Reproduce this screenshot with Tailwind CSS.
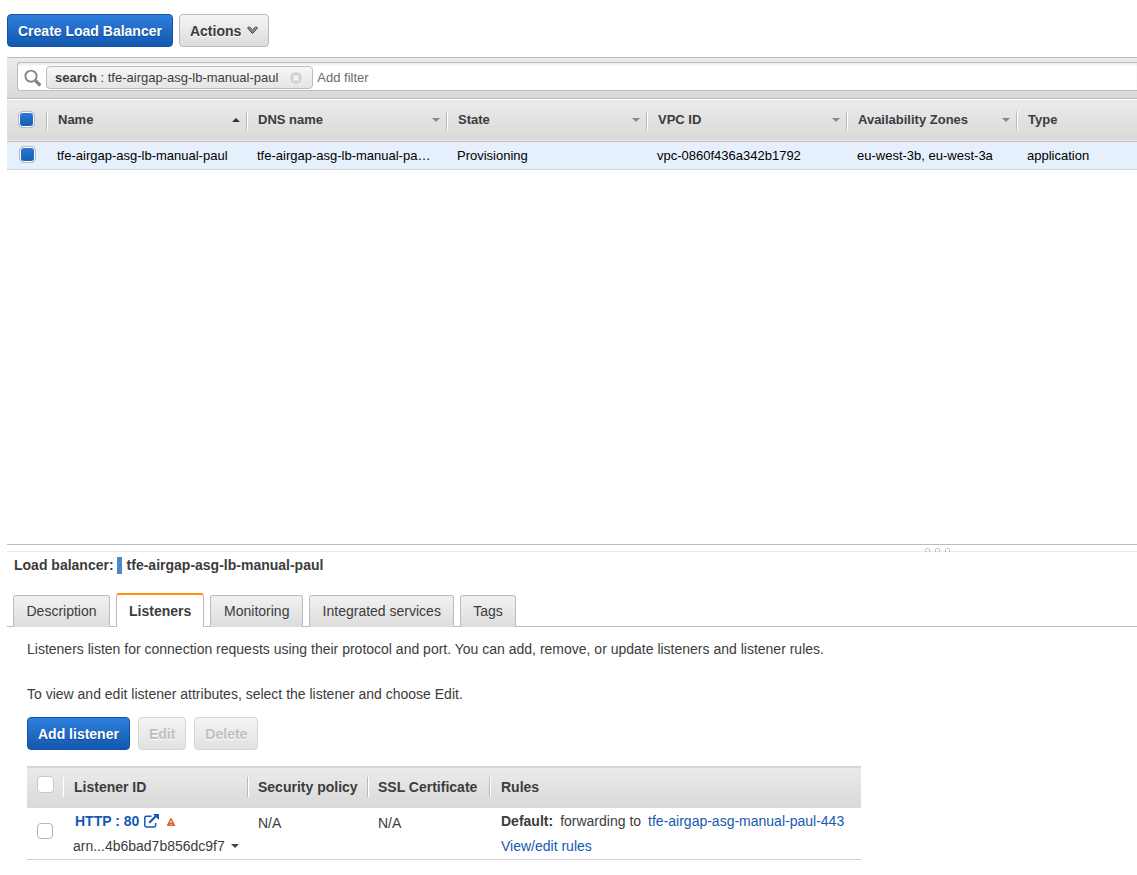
<!DOCTYPE html>
<html lang="en">
<head>
<meta charset="utf-8">
<title>Load Balancers</title>
<script src="https://cdn.jsdelivr.net/npm/@tailwindcss/browser@4"></script>
</head>
<body class="flex min-h-screen flex-col bg-white pl-[7px] font-['Liberation_Sans',Arial,sans-serif] text-[14px] leading-[20px] text-[#3c3c3c]">

<header class="flex gap-[6px] pt-[14px] pb-[10px]">
  <button class="h-[33px] rounded-[4px] border border-[#1552a0] bg-linear-to-b from-[#2f7fde] to-[#1158af] px-[10px] font-bold text-white [text-shadow:0_1px_1px_#0f4a94]">Create Load Balancer</button>
  <button class="flex h-[33px] items-center gap-[6px] rounded-[4px] border border-[#bababa] bg-linear-to-b from-[#f4f4f4] to-[#dddddd] px-[10px] font-bold [text-shadow:0_1px_0_#fff]">Actions
    <svg class="h-[10px] w-[11px]" viewBox="0 0 11 10" aria-hidden="true"><path d="M1 1h2.500l2 2.500L7.500 1H10v1.500L5.500 7.500 1 2.500z" fill="#8c8c8c"/><path d="M1 1v1.500l4.500 5 4.500-5V1" fill="none" stroke="#3c3c3c"/><path d="M1 1h2l2.500 2.800L8 1h2" fill="none" stroke="#666" stroke-width=".8"/></svg>
  </button>
</header>

<section class="min-h-[480px] flex-1">
  <div class="border-y border-[#bcbcbc] bg-linear-to-b from-[#ebebeb] to-[#d9d9d9] pt-[4px] pb-[7px] pl-[10px]">
    <div class="flex h-[29px] items-center rounded-l-[3px] border border-r-0 border-[#bcbcbc] bg-white pt-[2px] pl-[6px] text-[13px] shadow-[inset_0_2px_2px_#eeeeee]">
      <svg class="mr-[4px] h-[18px] w-[18px]" viewBox="0 0 18 18" fill="none" stroke="#858585" aria-hidden="true"><circle cx="7" cy="7.200" r="5.600" stroke-width="1.900"/><path d="m11.300 11.500 5 5" stroke-width="3.200"/></svg>
      <div class="flex h-[23px] items-center rounded-[4px] border border-[#bcbcbc] bg-linear-to-b from-[#f7f7f7] to-[#e5e5e5] pr-[10px] pl-[8px]">
        <span><b>search</b> : tfe-airgap-asg-lb-manual-paul</span>
        <button class="ml-[12px]" aria-label="Remove filter"><svg class="block h-[12px] w-[12px]" viewBox="0 0 12 12"><circle cx="6" cy="6" r="6" fill="#d2d2d2"/><path d="m3.500 3.500 5 5m0-5-5 5" stroke="#fff" stroke-width="1.600"/></svg></button>
      </div>
      <input class="ml-[4px] min-w-0 flex-1 outline-none placeholder:text-[#6b6b6b]" type="text" placeholder="Add filter" aria-label="Add filter">
    </div>
  </div>
  <table class="mt-px w-full table-fixed text-left text-[13px]">
    <colgroup><col class="w-[39px]"><col class="w-[200px]"><col class="w-[200px]"><col class="w-[200px]"><col class="w-[200px]"><col class="w-[170px]"><col></colgroup>
    <thead>
      <tr class="h-[41px] border-b border-[#bcbcbc] bg-linear-to-b from-[#ebebeb] to-[#d9d9d9]">
        <th class="p-0 pb-[2px] pl-[11px]"><input type="checkbox" checked aria-label="Select all load balancers" class="block size-[17px] appearance-none rounded-[5px] border border-[#bbbbbb] bg-white checked:bg-linear-to-b checked:from-[#2a79d8] checked:to-[#155cb4] checked:shadow-[inset_0_0_0_1px_#fff]"></th>
        <th class="p-0"><div class="flex h-[19px] items-center justify-between border-l border-[#bbbbbb] pr-[6px] pl-[11px] shadow-[inset_1px_0_0_#fff]">Name<svg class="h-[4px] w-[8px]" viewBox="0 0 8 4" aria-hidden="true"><path d="M0 4 4 0l4 4z" fill="#333"/></svg></div></th>
        <th class="p-0"><div class="flex h-[19px] items-center justify-between border-l border-[#bbbbbb] pr-[6px] pl-[11px] shadow-[inset_1px_0_0_#fff]">DNS name<svg class="h-[4px] w-[8px]" viewBox="0 0 8 4" aria-hidden="true"><path d="M0 0h8L4 4z" fill="#888"/></svg></div></th>
        <th class="p-0"><div class="flex h-[19px] items-center justify-between border-l border-[#bbbbbb] pr-[6px] pl-[11px] shadow-[inset_1px_0_0_#fff]">State<svg class="h-[4px] w-[8px]" viewBox="0 0 8 4" aria-hidden="true"><path d="M0 0h8L4 4z" fill="#888"/></svg></div></th>
        <th class="p-0"><div class="flex h-[19px] items-center justify-between border-l border-[#bbbbbb] pr-[6px] pl-[11px] shadow-[inset_1px_0_0_#fff]">VPC ID<svg class="h-[4px] w-[8px]" viewBox="0 0 8 4" aria-hidden="true"><path d="M0 0h8L4 4z" fill="#888"/></svg></div></th>
        <th class="p-0"><div class="flex h-[19px] items-center justify-between border-l border-[#bbbbbb] pr-[6px] pl-[11px] shadow-[inset_1px_0_0_#fff]">Availability Zones<svg class="h-[4px] w-[8px]" viewBox="0 0 8 4" aria-hidden="true"><path d="M0 0h8L4 4z" fill="#888"/></svg></div></th>
        <th class="p-0"><div class="flex h-[19px] items-center border-l border-[#bbbbbb] pl-[11px] shadow-[inset_1px_0_0_#fff]">Type</div></th>
      </tr>
    </thead>
    <tbody>
      <tr class="h-[28px] border-b border-[#d0d5db] bg-[#e6f0fc] text-black">
        <td class="p-0 pb-[2px] pl-[12px]"><input type="checkbox" checked aria-label="Select tfe-airgap-asg-lb-manual-paul" class="block size-[17px] appearance-none rounded-[5px] border border-[#bbbbbb] bg-white checked:bg-linear-to-b checked:from-[#2a79d8] checked:to-[#155cb4] checked:shadow-[inset_0_0_0_1px_#fff]"></td>
        <td class="p-0 pt-px pl-[11px]">tfe-airgap-asg-lb-manual-paul</td>
        <td class="p-0 pt-px pl-[11px]">tfe-airgap-asg-lb-manual-pa…</td>
        <td class="p-0 pt-px pl-[11px]">Provisioning</td>
        <td class="p-0 pt-px pl-[11px]">vpc-0860f436a342b1792</td>
        <td class="p-0 pt-px pl-[11px]">eu-west-3b, eu-west-3a</td>
        <td class="p-0 pt-px pl-[11px]">application</td>
      </tr>
    </tbody>
  </table>
</section>

<section class="pb-[15px]">
  <div class="relative h-[8px] border-t border-b border-t-[#bcbcbc] border-b-[#ebebeb]">
    <svg class="absolute top-[3px] left-[918px] h-[4px] w-[25px]" viewBox="0 0 25 4" fill="none" stroke="#bcbcbc" aria-hidden="true"><path d="M.5 4V1.500L1.500.5h2l1 1V4M10.500 4V1.500l1-1h2l1 1V4M20.500 4V1.500l1-1h2l1 1V4"/></svg>
  </div>
  <h2 class="flex items-center pt-[3px] pl-[7px] font-bold">Load balancer:<span class="mr-[5px] ml-[3px] h-[17px] w-[5px] bg-[#4a8acb]"></span>tfe-airgap-asg-lb-manual-paul</h2>
  <div role="tablist" class="mt-[18px] flex items-end gap-[6px] border-b border-[#bcbcbc] pl-[6px]">
    <button role="tab" class="-mb-px h-[32px] min-w-[97px] rounded-t-[3px] border border-b-0 border-[#bcbcbc] bg-linear-to-b from-[#f2f2f2] to-[#dcdcdc] px-[12px] pb-[2px]">Description</button>
    <button role="tab" aria-selected="true" class="-mb-px h-[34px] rounded-t-[3px] border border-t-2 border-b-0 border-[#bcbcbc] border-t-[#ff9100] bg-white px-[12px] font-bold">Listeners</button>
    <button role="tab" class="-mb-px h-[32px] min-w-[93px] rounded-t-[3px] border border-b-0 border-[#bcbcbc] bg-linear-to-b from-[#f2f2f2] to-[#dcdcdc] px-[12px] pb-[2px]">Monitoring</button>
    <button role="tab" class="-mb-px h-[32px] min-w-[145px] rounded-t-[3px] border border-b-0 border-[#bcbcbc] bg-linear-to-b from-[#f2f2f2] to-[#dcdcdc] px-[12px] pb-[2px]">Integrated services</button>
    <button role="tab" class="-mb-px h-[32px] rounded-t-[3px] border border-b-0 border-[#bcbcbc] bg-linear-to-b from-[#f2f2f2] to-[#dcdcdc] px-[12px] pb-[2px]">Tags</button>
  </div>
  <div role="tabpanel" class="pt-[12px] pl-[20px]">
    <p>Listeners listen for connection requests using their protocol and port. You can add, remove, or update listeners and listener rules.</p>
    <p class="mt-[25px]">To view and edit listener attributes, select the listener and choose Edit.</p>
    <div class="mt-[13px] flex gap-[8px]">
      <button class="h-[33px] rounded-[4px] border border-[#1552a0] bg-linear-to-b from-[#2f7fde] to-[#1158af] px-[10px] font-bold text-white [text-shadow:0_1px_1px_#0f4a94]">Add listener</button>
      <button disabled class="h-[33px] rounded-[4px] border border-[#d5d5d5] bg-linear-to-b from-[#f4f4f4] to-[#e2e2e2] px-[10px] font-bold text-[#c0c0c0] [text-shadow:0_1px_0_#fff]">Edit</button>
      <button disabled class="h-[33px] rounded-[4px] border border-[#d5d5d5] bg-linear-to-b from-[#f4f4f4] to-[#e2e2e2] px-[10px] font-bold text-[#c0c0c0] [text-shadow:0_1px_0_#fff]">Delete</button>
    </div>
    <table class="mt-[16px] w-full max-w-[834px] table-fixed text-left">
      <colgroup><col class="w-[36px]"><col class="w-[184px]"><col class="w-[120px]"><col class="w-[122px]"><col></colgroup>
      <thead>
        <tr class="h-[41px] border-t border-[#d0d0d0] bg-linear-to-b from-[#ebebeb] to-[#d9d9d9]">
          <th class="p-0 pb-[6px] pl-[10px]"><input type="checkbox" aria-label="Select all listeners" class="block size-[17px] appearance-none rounded-[4px] border border-[#c8c8c8] bg-white"></th>
          <th class="p-0"><div class="flex h-[20px] items-center border-l border-white pl-[10px]">Listener ID</div></th>
          <th class="p-0"><div class="flex h-[20px] items-center border-l border-[#bbbbbb] pl-[10px] whitespace-nowrap shadow-[inset_1px_0_0_#fff]">Security policy</div></th>
          <th class="p-0"><div class="flex h-[20px] items-center border-l border-[#bbbbbb] pl-[10px] whitespace-nowrap shadow-[inset_1px_0_0_#fff]">SSL Certificate</div></th>
          <th class="p-0"><div class="flex h-[20px] items-center border-l border-[#bbbbbb] pl-[11px] shadow-[inset_1px_0_0_#fff]">Rules</div></th>
        </tr>
      </thead>
      <tbody>
        <tr class="h-[52px] border-b border-[#d0d0d0] align-top">
          <td class="p-0 pt-[15px] pl-[10px]"><input type="checkbox" aria-label="Select HTTP : 80" class="block size-[16px] appearance-none rounded-[4px] border border-[#b5b5b5] bg-white"></td>
          <td class="p-0 pt-[3px] pl-[10px]">
            <div class="flex items-center pl-[2px]"><a href="#" class="flex items-center gap-[5px] font-bold text-[#1459b3]">HTTP : 80
              <svg class="h-[14px] w-[15px]" viewBox="0 0 15 14" fill="none" stroke="#1459b3" stroke-width="1.500" aria-hidden="true"><path d="M7.500 2.200H2.200Q.8 2.200.8 3.600v8q0 1.400 1.400 1.400h8q1.400 0 1.400-1.400V9"/><path d="M5.200 8.800 12 2" stroke-width="2.200"/><path d="M9 0h6v6z" fill="#1459b3" stroke="none"/></svg></a>
              <svg class="mt-[3px] ml-[8px] h-[8px] w-[8px]" viewBox="0 0 8 8" role="img" aria-label="Warning"><path d="M3.500 0h1L8 7v1H0V7z" fill="#e0662a"/><path d="M4 2.600v2.400M4 6v1" stroke="#fff"/></svg>
            </div>
            <button class="mt-[5px] flex items-center gap-[6px]">arn...4b6bad7b856dc9f7<svg class="h-[4px] w-[8px]" viewBox="0 0 8 4" aria-hidden="true"><path d="M0 0h8L4 4z" fill="#444"/></svg></button>
          </td>
          <td class="p-0 pt-[5px] pl-[11px]">N/A</td>
          <td class="p-0 pt-[5px] pl-[11px]">N/A</td>
          <td class="p-0 pt-[3px] pl-[12px]">
            <div class="flex whitespace-nowrap"><b class="mr-[7px]">Default:</b>forwarding to<a href="#" class="ml-[7px] text-[#1459b3]">tfe-airgap-asg-manual-paul-443</a></div>
            <a href="#" class="mt-[5px] block text-[#1459b3]">View/edit rules</a>
          </td>
        </tr>
      </tbody>
    </table>
  </div>
</section>
</body>
</html>
